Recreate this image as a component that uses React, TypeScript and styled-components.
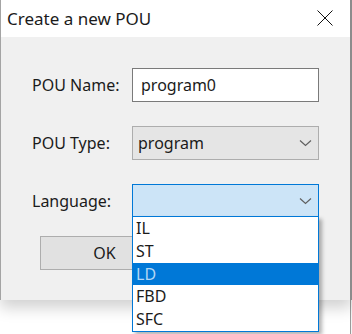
import React from "react";
import styled, { createGlobalStyle } from "styled-components";

const Global = createGlobalStyle`
  html, body { margin: 0; padding: 0; }
  body {
    width: 352px;
    height: 334px;
    overflow: hidden;
    background:
      linear-gradient(to right, transparent 350px, #9a9a9a 350px, #9a9a9a 351px, #f4f4f4 351px);
    font-family: "Noto Sans", "Open Sans", sans-serif;
    color: #1b1b1b;
  }
`;

const Window = styled.div`
  width: 349px;
  border-left: 1px solid #a4a4a4;
  border-right: 2px solid #8c8c8c;
  display: flex;
  flex-direction: column;
  box-shadow: 0 8px 14px rgba(0, 0, 0, 0.18);
`;

const TitleBar = styled.div`
  height: 37px;
  background: #ffffff;
  display: flex;
  align-items: center;
  justify-content: space-between;
  padding: 0 17px 0 6px;
  font-size: 17px;
`;

const CloseBtn = styled.div`
  width: 16px;
  height: 16px;
  display: flex;
  margin-top: -1px;
`;

const Body = styled.div`
  height: 232px;
  background: #f0f0f0;
  padding: 31px 0 0 31px;
  display: flex;
  flex-direction: column;
`;

const Form = styled.div`
  display: grid;
  grid-template-columns: 100px 187px;
  grid-template-rows: 34px 34px 33px;
  row-gap: 24px;
  align-items: center;
`;

const Label = styled.div`
  font-size: 16px;
  line-height: 20px;
`;

const TextInput = styled.div`
  height: 34px;
  box-sizing: border-box;
  border: 1px solid #7a7a7a;
  background: #fff;
  display: flex;
  align-items: center;
  padding-left: 8px;
  font-size: 16px;
`;

const Combo = styled.div<{ $active?: boolean }>`
  position: relative;
  height: ${(p) => (p.$active ? "33px" : "34px")};
  box-sizing: border-box;
  border: 1px solid ${(p) => (p.$active ? "#0078d7" : "#adadad")};
  background: ${(p) => (p.$active ? "#cce4f7" : "#e5e5e5")};
  display: flex;
  align-items: center;
  justify-content: space-between;
  padding: 0 6px 0 5px;
  font-size: 16px;
`;

const Chevron = () => (
  <svg width="13" height="8" viewBox="0 0 13 8">
    <path d="M1 1.5 L6.5 6.5 L12 1.5" fill="none" stroke="#606060" strokeWidth="1.2" />
  </svg>
);

const List = styled.div`
  position: absolute;
  top: 100%;
  left: -1px;
  width: 187px;
  box-sizing: border-box;
  border: 1px solid #0078d7;
  background: #fff;
  box-shadow: 3px 3px 4px rgba(0, 0, 0, 0.3);
  display: flex;
  flex-direction: column;
  z-index: 2;
`;

const Item = styled.div<{ $selected?: boolean }>`
  height: 22.8px;
  line-height: 22.8px;
  padding-left: 3px;
  font-size: 16px;
  background: ${(p) => (p.$selected ? "#0078d7" : "transparent")};
  color: ${(p) => (p.$selected ? "#b2d7f5" : "#1b1b1b")};
`;

const Button = styled.div`
  margin: 19px 0 0 8px;
  width: 129px;
  height: 34px;
  box-sizing: border-box;
  border: 1px solid #adadad;
  background: #e1e1e1;
  display: flex;
  align-items: center;
  justify-content: center;
  font-size: 16px;
`;

const languages = ["IL", "ST", "LD", "FBD", "SFC"];

export default function App() {
  return (
    <>
      <Global />
      <Window>
        <TitleBar>
          <span>Create a new POU</span>
          <CloseBtn>
            <svg width="16" height="16" viewBox="0 0 16 16">
              <path d="M0.5 0.5 L15.5 15.5 M15.5 0.5 L0.5 15.5" stroke="#111" strokeWidth="1" />
            </svg>
          </CloseBtn>
        </TitleBar>
        <Body>
          <Form>
            <Label>POU Name:</Label>
            <TextInput>program0</TextInput>
            <Label>POU Type:</Label>
            <Combo>
              <span>program</span>
              <Chevron />
            </Combo>
            <Label>Language:</Label>
            <Combo $active>
              <span />
              <Chevron />
              <List>
                {languages.map((l) => (
                  <Item key={l} $selected={l === "LD"}>
                    {l}
                  </Item>
                ))}
              </List>
            </Combo>
          </Form>
          <Button>OK</Button>
        </Body>
      </Window>
    </>
  );
}
